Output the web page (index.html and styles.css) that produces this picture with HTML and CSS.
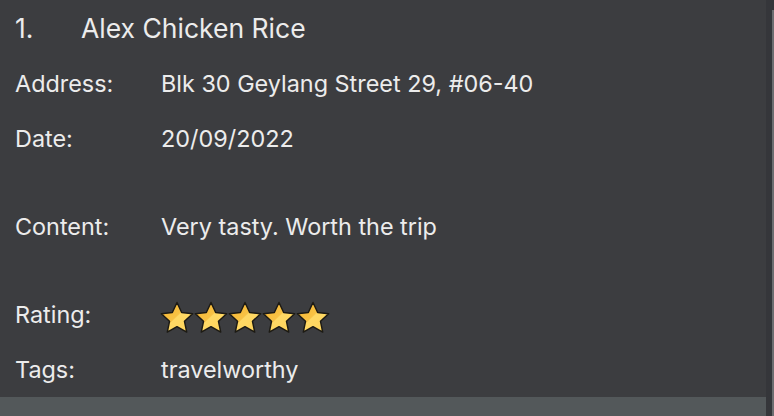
FILE: index.html
```html
<!DOCTYPE html>
<html>
<head>
<meta charset="utf-8">
<link rel="stylesheet" href="styles.css">
</head>
<body>
<div class="frame">
  <div class="list">
    <div class="card">
      <div class="title-row">
        <span class="index">1.</span>
        <span class="name">Alex Chicken Rice</span>
      </div>
      <div class="field row-address">
        <span class="label">Address:</span>
        <span class="value">Blk 30 Geylang Street 29, #06-40</span>
      </div>
      <div class="field row-date">
        <span class="label">Date:</span>
        <span class="value">20/09/2022</span>
      </div>
      <div class="field row-content">
        <span class="label">Content:</span>
        <span class="value">Very tasty. Worth the trip</span>
      </div>
      <div class="field row-rating">
        <span class="label">Rating:</span>
        <span class="stars">
          <svg class="star" viewBox="0 0 35 33"><defs><linearGradient id="g" x1="0" y1="0" x2="1" y2="1"><stop offset="0" stop-color="#f5b230"/><stop offset="0.47" stop-color="#f8c244"/><stop offset="0.5" stop-color="#ffd965"/><stop offset="1" stop-color="#ffd458"/></linearGradient></defs><polygon points="17.5,1 22.3,11.3 33.6,12.6 25.2,20.4 27.5,31.5 17.5,25.9 7.5,31.5 9.8,20.4 1.4,12.6 12.7,11.3" fill="url(#g)" stroke="#1c1a14" stroke-width="1.5" stroke-linejoin="round"/></svg>
          <svg class="star" viewBox="0 0 35 33"><polygon points="17.5,1 22.3,11.3 33.6,12.6 25.2,20.4 27.5,31.5 17.5,25.9 7.5,31.5 9.8,20.4 1.4,12.6 12.7,11.3" fill="url(#g)" stroke="#1c1a14" stroke-width="1.5" stroke-linejoin="round"/></svg>
          <svg class="star" viewBox="0 0 35 33"><polygon points="17.5,1 22.3,11.3 33.6,12.6 25.2,20.4 27.5,31.5 17.5,25.9 7.5,31.5 9.8,20.4 1.4,12.6 12.7,11.3" fill="url(#g)" stroke="#1c1a14" stroke-width="1.5" stroke-linejoin="round"/></svg>
          <svg class="star" viewBox="0 0 35 33"><polygon points="17.5,1 22.3,11.3 33.6,12.6 25.2,20.4 27.5,31.5 17.5,25.9 7.5,31.5 9.8,20.4 1.4,12.6 12.7,11.3" fill="url(#g)" stroke="#1c1a14" stroke-width="1.5" stroke-linejoin="round"/></svg>
          <svg class="star" viewBox="0 0 35 33"><polygon points="17.5,1 22.3,11.3 33.6,12.6 25.2,20.4 27.5,31.5 17.5,25.9 7.5,31.5 9.8,20.4 1.4,12.6 12.7,11.3" fill="url(#g)" stroke="#1c1a14" stroke-width="1.5" stroke-linejoin="round"/></svg>
        </span>
      </div>
      <div class="field row-tags">
        <span class="label">Tags:</span>
        <span class="value">travelworthy</span>
      </div>
    </div>
    <div class="card next"></div>
  </div>
  <div class="scrollbar"><div class="thumb"></div></div>
</div>
</body>
</html>
```
FILE: styles.css
```css
* { box-sizing: border-box; }
html, body { margin: 0; padding: 0; }
body {
  width: 774px;
  height: 416px;
  overflow: hidden;
  background: #3c3d40;
  font-family: "Inter", "Noto Sans", sans-serif;
  color: #ececec;
}
.frame {
  display: flex;
  height: 416px;
}
.list {
  flex: 1;
  display: flex;
  flex-direction: column;
  overflow: hidden;
}
.card {
  padding: 0 0 0 15px;
  display: flex;
  flex-direction: column;
  flex-shrink: 0;
}
.title-row {
  height: 57px;
  display: flex;
  align-items: center;
  font-size: 26.5px;
  padding-bottom: 2px;
}
.index { width: 66px; }
.field {
  display: flex;
  align-items: center;
  font-size: 23.4px;
}
.label { width: 146px; flex-shrink: 0; }
.row-address { height: 53px; }
.row-date { height: 56px; }
.row-content { height: 121px; }
.row-rating { height: 55px; }
.row-tags { height: 55px; }
.stars { display: flex; gap: 0; padding-top: 5px; margin-left: -1px; }
.star { width: 34px; height: 33px; display: block; }
.next {
  height: 40px;
  background: #53585a;
}
.scrollbar {
  width: 8px;
  background: #35363a;
  display: flex;
  justify-content: flex-end;
  padding-top: 10px;
}
.thumb {
  width: 2px;
  height: 100%;
  background: #6c6d70;
}
```
